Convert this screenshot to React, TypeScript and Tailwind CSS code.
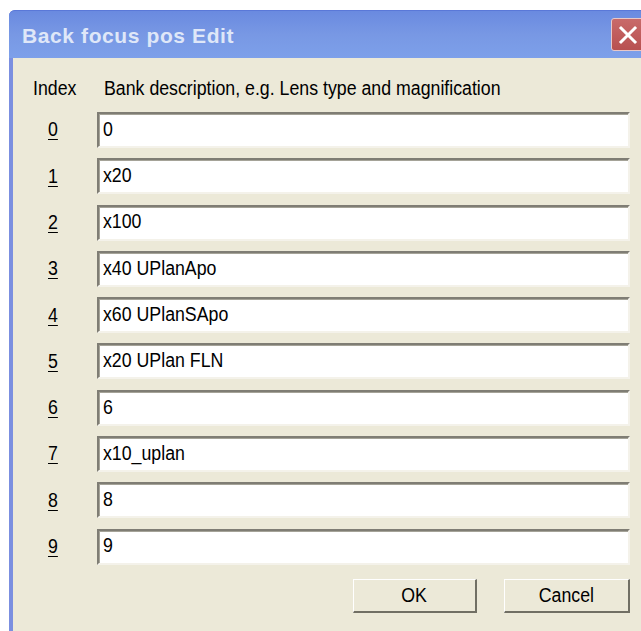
import React from "react";

const banks = [
  "0",
  "x20",
  "x100",
  "x40 UPlanApo",
  "x60 UPlanSApo",
  "x20 UPlan FLN",
  "6",
  "x10_uplan",
  "8",
  "9",
];

const body = {
  fontFamily: '"Liberation Sans", Arial, sans-serif',
};

// Dialog font is taller than it is wide; squeeze Arial metrics horizontally.
function Narrow({ children, center }: { children: React.ReactNode; center?: boolean }) {
  return (
    <span
      className={
        center
          ? "inline-block whitespace-nowrap scale-x-[0.91] origin-center"
          : "inline-block whitespace-nowrap scale-x-[0.91] origin-left"
      }
    >
      {children}
    </span>
  );
}

function CloseButton() {
  return (
    <div className="w-[34px] h-[33px] rounded-[3px] border border-[#e8c8c8] bg-gradient-to-b from-[#c86a6a] to-[#b85050] flex items-center justify-center shrink-0">
      <svg width="20" height="20" viewBox="0 0 20 20">
        <path d="M3 3 L17 17 M17 3 L3 17" stroke="#fff" strokeWidth="3" strokeLinecap="square" />
      </svg>
    </div>
  );
}

function Field({ value }: { value: string }) {
  return (
    <div className="h-[36px] flex-1 border-t-2 border-l-2 border-t-[#7f7d74] border-l-[#7f7d74] border-b-2 border-r-2 border-b-[#f4f2ea] border-r-[#f4f2ea] bg-white">
      <div className="h-full border-t border-l border-t-[#a5a398] border-l-[#a5a398] flex items-center pl-[3px] text-[19.5px] text-black leading-none pb-[2px]">
        <Narrow>{value}</Narrow>
      </div>
    </div>
  );
}

function Button({ label }: { label: string }) {
  return (
    <div className="h-[34px] border-t border-l border-t-white border-l-white border-b-2 border-r-2 border-b-[#716f64] border-r-[#716f64] bg-[#ece9d8] flex items-center justify-center text-[19.5px] text-black">
      <Narrow center>{label}</Narrow>
    </div>
  );
}

export default function App() {
  return (
    <div className="w-[641px] h-[631px] bg-white overflow-hidden pt-[10px] pl-[9px]">
      <div className="w-[640px] h-[640px] bg-[#7b8fe0] rounded-tl-[6px] flex flex-col">
        {/* title bar */}
        <div className="h-[48px] shrink-0 flex items-center pl-[13px] pr-[4px] rounded-tl-[6px] bg-gradient-to-b from-[#6a8ae0] via-[#7898e4] to-[#7da0ea] border-t border-t-[#5a78d8]">
          <div
            className="flex-1 text-[21px] font-bold text-[#dfe7f8] tracking-[0.6px] pt-[2px]"
            style={{ fontFamily: '"Liberation Sans", Arial, sans-serif' }}
          >
            Back focus pos Edit
          </div>
          <CloseButton />
        </div>
        {/* client area */}
        <div className="flex-1 ml-[4px] bg-[#ece9d8] pt-[19px] pl-[20px] pr-[19px]" style={body}>
          <div className="flex text-[19.5px] text-black leading-[23px]">
            <div className="w-[71px]">
              <Narrow>Index</Narrow>
            </div>
            <div>
              <Narrow>Bank description, e.g. Lens type and magnification</Narrow>
            </div>
          </div>
          <div className="mt-[12px] flex flex-col gap-[10.3px]">
            {banks.map((b, i) => (
              <div key={i} className="flex items-center">
                <div className="w-[64px] pl-[15px] text-[19.5px] text-black">
                  <Narrow>
                    <span className="underline underline-offset-[3px] decoration-1">{i}</span>
                  </Narrow>
                </div>
                <Field value={b} />
              </div>
            ))}
          </div>
          <div className="mt-[14px] flex justify-end gap-[27px]">
            <div className="w-[124px]">
              <Button label="OK" />
            </div>
            <div className="w-[126px]">
              <Button label="Cancel" />
            </div>
          </div>
        </div>
      </div>
    </div>
  );
}
